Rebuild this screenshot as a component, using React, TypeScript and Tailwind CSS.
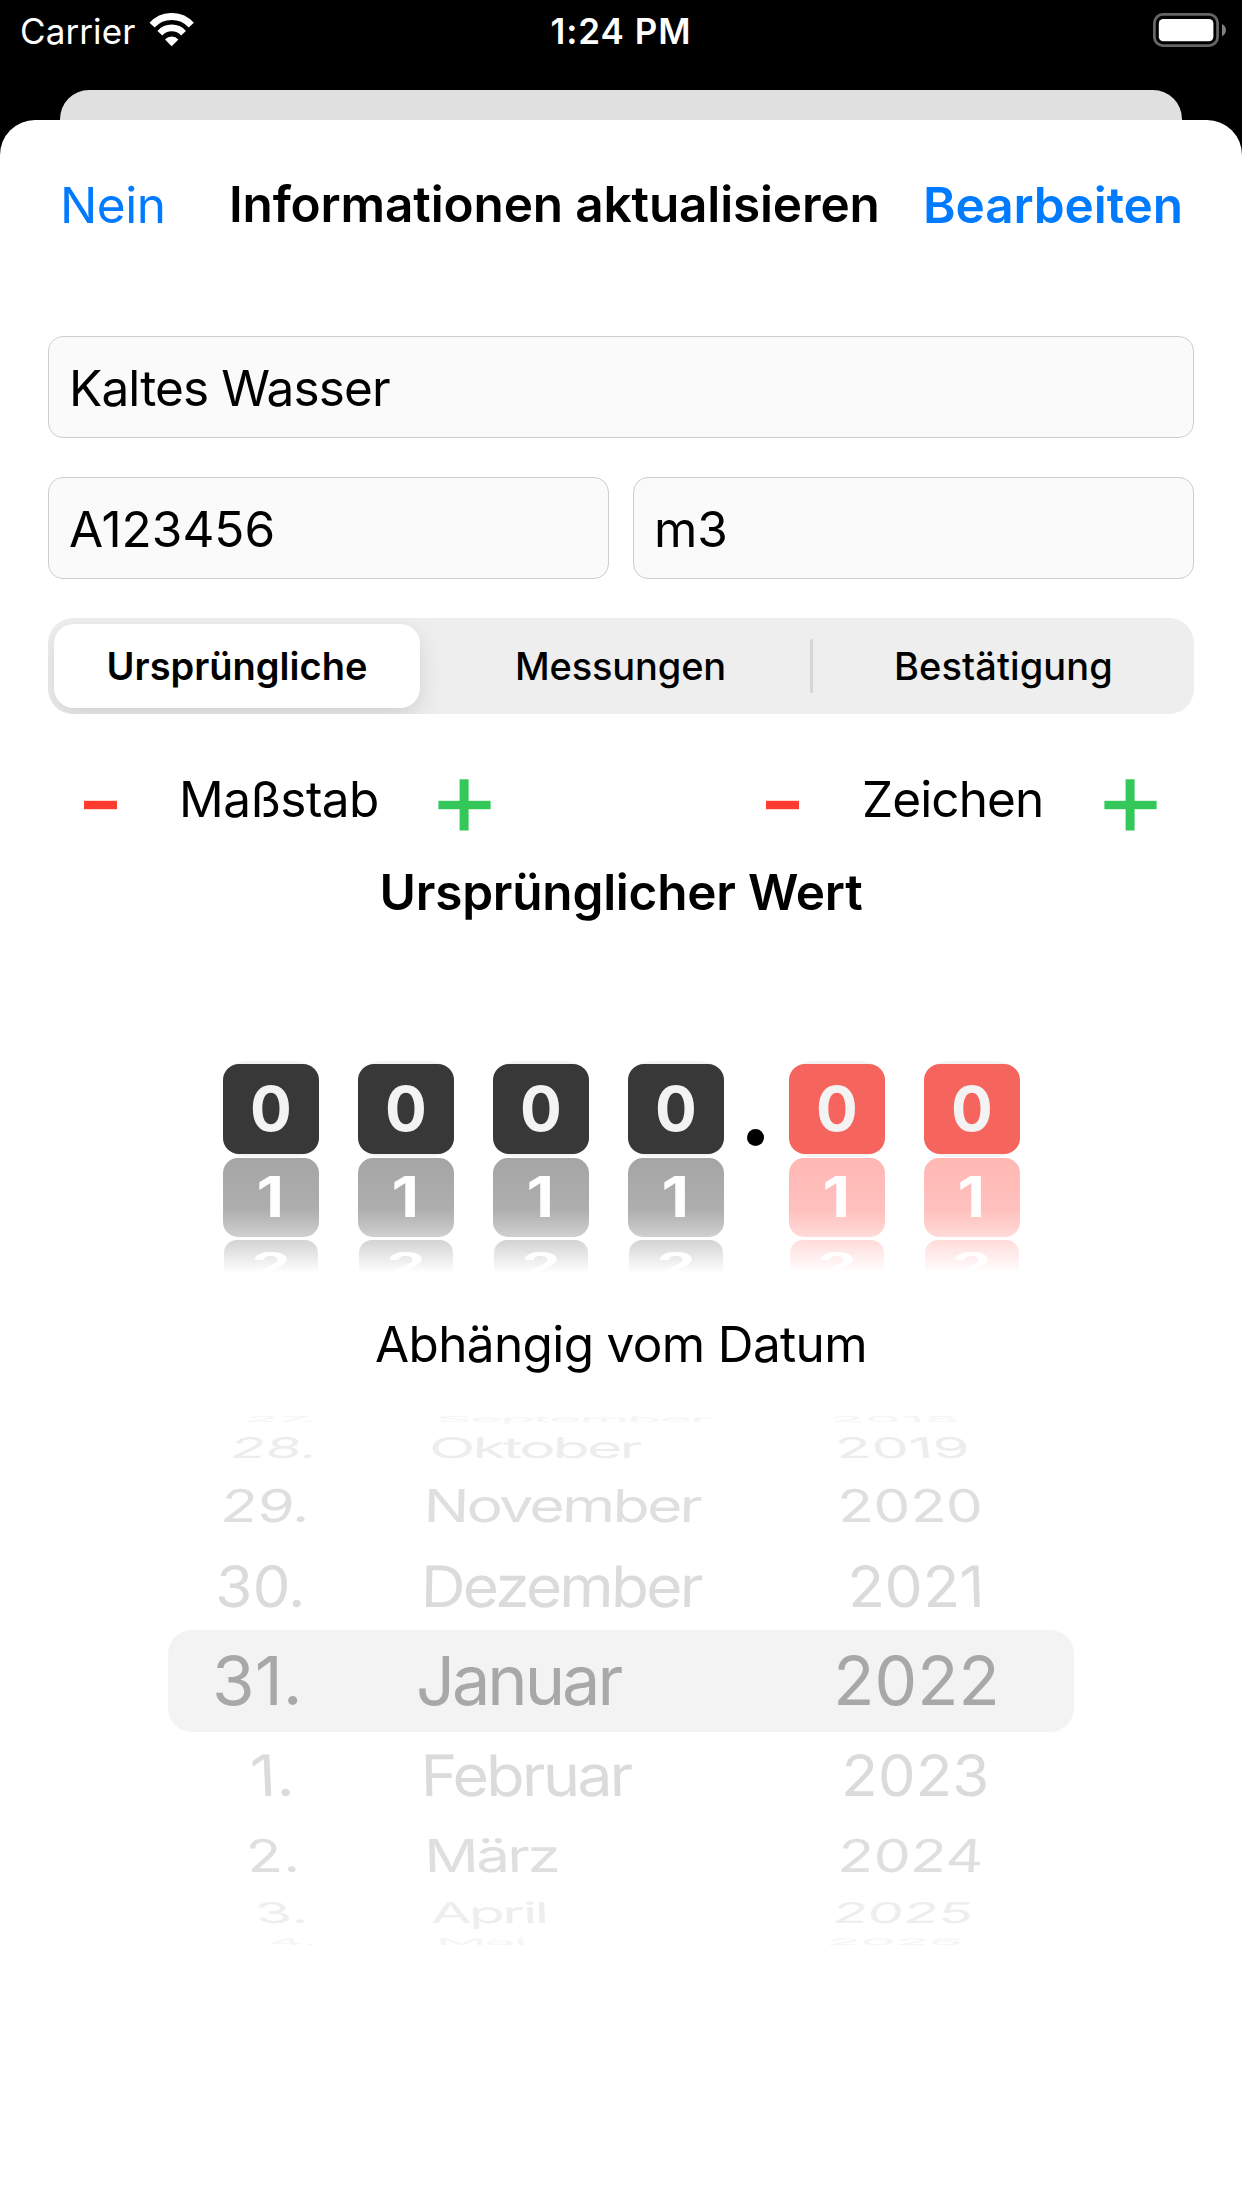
import { useState } from "react";
import { clsx } from "clsx";

const TABS = ["Ursprüngliche", "Messungen", "Bestätigung"];

const WHEELS = [
  { digit: "0", fraction: false },
  { digit: "0", fraction: false },
  { digit: "0", fraction: false },
  { digit: "0", fraction: false },
  { digit: "0", fraction: true },
  { digit: "0", fraction: true },
];

// x: offset inside the column, sx: horizontal squeeze, skew: lean in degrees
type Cell = { text: string; x: number; sx: number; skew: number };
type Row = { height: string; color: string; sy: number; cells: Cell[] };

const DATE_ROWS: Row[] = [
  {
    height: "h-[6px]",
    color: "text-[#f5f5f5]",
    sy: 0.12,
    cells: [
      { text: "27.", x: 26, sx: 0.81, skew: -35 },
      { text: "September", x: 17, sx: 0.84, skew: -12 },
      { text: "2018", x: -3.6, sx: 0.85, skew: 22 },
    ],
  },
  {
    height: "h-[36px]",
    color: "text-[#ededed]",
    sy: 0.42,
    cells: [
      { text: "28.", x: 13, sx: 0.85, skew: -11 },
      { text: "Oktober", x: 10.8, sx: 0.886, skew: -2 },
      { text: "2019", x: 2.6, sx: 0.87, skew: 7 },
    ],
  },
  {
    height: "h-[64px]",
    color: "text-[#dfdfdf]",
    sy: 0.665,
    cells: [
      { text: "29.", x: 3.8, sx: 0.878, skew: -5 },
      { text: "November", x: 5.3, sx: 0.892, skew: -1.5 },
      { text: "2020", x: 4.6, sx: 0.86, skew: 3 },
    ],
  },
  {
    height: "h-[85px]",
    color: "text-[#dbdbdb]",
    sy: 0.84,
    cells: [
      { text: "30.", x: -1.2, sx: 0.881, skew: -2.5 },
      { text: "Dezember", x: 2.4, sx: 0.913, skew: -1 },
      { text: "2021", x: 14.2, sx: 0.892, skew: 2 },
    ],
  },
  {
    height: "h-[102px] mt-[23px] pb-[27px] rounded-[24px] bg-[#f3f3f3]",
    color: "text-[#a8a8a8]",
    sy: 1,
    cells: [
      { text: "31.", x: -4, sx: 1.016, skew: 0 },
      { text: "Januar", x: -2, sx: 1.005, skew: 0 },
      { text: "2022", x: -0.8, sx: 0.995, skew: 0 },
    ],
  },
  {
    height: "h-[64px]",
    color: "text-[#dbdbdb]",
    sy: 0.84,
    cells: [
      { text: "1.", x: 35.2, sx: 0.922, skew: 2.7 },
      { text: "Februar", x: 3, sx: 0.923, skew: 1 },
      { text: "2023", x: 7, sx: 0.882, skew: -1 },
    ],
  },
  {
    height: "h-[76px]",
    color: "text-[#dfdfdf]",
    sy: 0.665,
    cells: [
      { text: "2.", x: 31.8, sx: 0.86, skew: 5 },
      { text: "März", x: 6.8, sx: 0.885, skew: 1.5 },
      { text: "2024", x: 3, sx: 0.863, skew: -3.5 },
    ],
  },
  {
    height: "h-[51px]",
    color: "text-[#eeeeee]",
    sy: 0.42,
    cells: [
      { text: "3.", x: 41, sx: 0.86, skew: 10 },
      { text: "April", x: 12.8, sx: 0.87, skew: 2 },
      { text: "2025", x: -2.6, sx: 0.84, skew: -9 },
    ],
  },
  {
    height: "h-[22px]",
    color: "text-[#f5f5f5]",
    sy: 0.13,
    cells: [
      { text: "4.", x: 53.5, sx: 0.8, skew: 28 },
      { text: "Mai", x: 18.5, sx: 0.83, skew: 12 },
      { text: "2026", x: -8.4, sx: 0.81, skew: -24 },
    ],
  },
];

function WifiIcon() {
  return (
    <svg width="46" height="34" viewBox="0 0 46 34" fill="none">
      <path d="M3.1 12.1A26.6 26.6 0 0 1 42.3 12.1" stroke="#fff" strokeWidth="7" />
      <path d="M10.9 20.2A15.8 15.8 0 0 1 34.5 20.2" stroke="#fff" strokeWidth="6.6" />
      <path d="M22.7 33.2L16 26.4A9.3 9.3 0 0 1 29.4 26.4Z" fill="#fff" />
    </svg>
  );
}

function BatteryIcon() {
  return (
    <svg width="74" height="34" viewBox="0 0 74 34" fill="none">
      <rect x="1.4" y="1.4" width="63.2" height="31.2" rx="8.5" stroke="#666" strokeWidth="2.8" />
      <rect x="5.8" y="6" width="54.6" height="22.3" rx="4.5" fill="#fff" />
      <path d="M69 11C71 12 73 14 73 17C73 20 71 22.3 69 23.3Z" fill="#808080" />
    </svg>
  );
}

function StatusBar() {
  return (
    <div className="grid h-[90px] grid-cols-3 items-start text-[35px] leading-[26px] text-white">
      <div className="flex items-start pt-[13px] pl-[20px]">
        <span className="mt-[5px] tracking-[0.1px]">Carrier</span>
        <span className="ml-[14px]">
          <WifiIcon />
        </span>
      </div>
      <div className="pt-[18px] text-center font-semibold tracking-[1px]">1:24 PM</div>
      <div className="flex justify-end pt-[13px] pr-[15px]">
        <BatteryIcon />
      </div>
    </div>
  );
}

function Field({ value }: { value: string }) {
  return (
    <input
      defaultValue={value}
      className={clsx(
        "h-[102px] w-full min-w-0 rounded-[15px] border border-[#cdcdcd] bg-[#fafafa] pt-[2px] pr-5 pl-5 text-[49.5px] text-black outline-none",
        value.includes(" ") && "tracking-[-0.88px]",
      )}
    />
  );
}

function MinusIcon() {
  return (
    <svg width="33" height="52" viewBox="0 0 33 52">
      <rect y="21.8" width="33" height="8.4" fill="#ff3b30" />
    </svg>
  );
}

function PlusIcon() {
  return (
    <svg width="53" height="52" viewBox="0 0 53 52">
      <rect x="0.4" y="21.8" width="52.2" height="8.4" fill="#34c759" />
      <rect x="21.6" y="0.3" width="9" height="51.2" fill="#34c759" />
    </svg>
  );
}

function Wheel({ digit, fraction }: { digit: string; fraction: boolean }) {
  return (
    <div className="flex w-[96px] flex-col items-center text-[62px] leading-[45px] font-[650]">
      <div className="h-[96px] w-full rounded-[24px] bg-[#f3f3f3] pt-[3px]">
        <div
          className={clsx(
            "flex h-[90px] justify-center rounded-[16px] pt-[22px] text-[#f3f3f3]",
            fraction ? "bg-[#f5645d]" : "bg-[#383838]",
          )}
        >
          {digit}
        </div>
      </div>
      <div
        className={clsx(
          "mt-px flex h-[79px] w-full justify-center rounded-[15px] bg-linear-to-b pt-[15px] font-bold text-white",
          fraction
            ? "from-[#ffb8b4] via-[#ffc0bd] via-65% to-[#ffdbd9]"
            : "from-[#a5a5a5] via-[#aeaeae] via-65% to-[#d0d0d0]",
        )}
      >
        <span className="-translate-x-px scale-x-[1.03] scale-y-[0.9]">1</span>
      </div>
      <div
        className={clsx(
          "mt-[3px] flex h-[33px] w-[94px] justify-center overflow-hidden rounded-t-[13px] bg-linear-to-b pt-[12px] text-white",
          fraction ? "from-[#ffdcda] to-white" : "from-[#d3d3d3] to-white",
        )}
      >
        <span className="origin-top scale-y-[0.55]">2</span>
      </div>
    </div>
  );
}

function DateRow({ row }: { row: Row }) {
  return (
    <div
      className={clsx(
        "grid shrink-0 grid-cols-[202px_416px_1fr] items-end pl-[48px] text-[68px] leading-[50px] whitespace-nowrap",
        row.height,
        row.color,
      )}
    >
      {row.cells.map((c, i) => (
        <div key={c.text} className="flex h-0 items-end">
          <span
            className={clsx("origin-bottom-left", i === 1 && "tracking-[-3px]")}
            style={{ transform: `translateX(${c.x}px) skewX(${c.skew}deg) scale(${c.sx}, ${row.sy})` }}
          >
            {c.text}
          </span>
        </div>
      ))}
    </div>
  );
}

export default function App() {
  const [tab, setTab] = useState(0);

  return (
    <div className="h-[2208px] w-[1242px] overflow-hidden bg-black font-['Inter',sans-serif] text-black">
      <StatusBar />
      <div className="mx-[60px] h-[30px] rounded-t-[29px] bg-[#e0e0e0]" />

      <div className="flex h-[2088px] flex-col rounded-t-[35px] bg-white">
        <header className="flex items-start pt-[66px] pl-[60px] text-[49.5px] leading-[36px] whitespace-nowrap">
          <button className="mt-px w-[106px] text-left tracking-[-0.5px] text-[#007aff]">Nein</button>
          <h1 className="ml-[63px] w-[652px] font-semibold tracking-[-0.14px]">
            Informationen aktualisieren
          </h1>
          <button className="mt-px ml-[42px] font-semibold tracking-[-0.1px] text-[#007aff]">
            Bearbeiten
          </button>
        </header>

        <div className="mt-[113px] flex flex-col gap-[39px] px-[48px]">
          <Field value="Kaltes Wasser" />
          <div className="flex gap-6">
            <Field value="A123456" />
            <Field value="m3" />
          </div>

          <div className="flex h-[96px] items-center overflow-hidden rounded-[25px] bg-[#eeeeee] px-[6px] text-[38px] leading-[28px]">
            {TABS.map((t, i) => (
              <div key={t} className="flex items-center">
                <button
                  onClick={() => setTab(i)}
                  className={clsx(
                    "h-[84px] rounded-[20px]",
                    i === 0 && "w-[366px]",
                    i === 1 && "w-[390px] pl-[11px] tracking-[-0.15px]",
                    i === 2 && "w-[381px] tracking-[0.1px]",
                    tab === i
                      ? "bg-white font-semibold shadow-[0_9px_24px_rgba(0,0,0,0.11),0_6px_3px_rgba(0,0,0,0.01)]"
                      : "font-medium",
                  )}
                >
                  {t}
                </button>
                {i === 1 && <div className="h-[54px] w-[3px] rounded-full bg-[#d5d5d5]" />}
              </div>
            ))}
          </div>
        </div>

        <div className="mt-[65px] flex h-[52px] items-start pl-[84px] text-[49.5px] leading-[36px]">
          <MinusIcon />
          <span className="mt-[2px] ml-[62px] w-[201px] tracking-[-0.55px]">Maßstab</span>
          <span className="ml-[58px]">
            <PlusIcon />
          </span>
          <span className="ml-[275px]">
            <MinusIcon />
          </span>
          <span className="mt-[2px] ml-[63px] w-[181px] tracking-[-0.9px]">Zeichen</span>
          <span className="ml-[61px]">
            <PlusIcon />
          </span>
        </div>

        <h2 className="mt-[43px] text-center text-[49.5px] leading-[36px] font-semibold tracking-[-0.22px]">
          Ursprünglicher Wert
        </h2>

        <div className="mt-[151px] flex h-[212px] pl-[223px]">
          <div className="flex gap-[39px]">
            {WHEELS.slice(0, 4).map((w, i) => (
              <Wheel key={i} {...w} />
            ))}
          </div>
          <div className="mt-[68px] mr-[25px] ml-[23px] size-[17px] rounded-full bg-black" />
          <div className="flex gap-[39px]">
            {WHEELS.slice(4).map((w, i) => (
              <Wheel key={i} {...w} />
            ))}
          </div>
        </div>

        <p className="mt-[53px] text-center text-[49.5px] leading-[36px] tracking-[-0.65px]">
          Abhängig vom Datum
        </p>

        <div className="mx-[168px] mt-[54px] flex flex-col">
          {DATE_ROWS.map((row) => (
            <DateRow key={row.cells[1].text} row={row} />
          ))}
        </div>
      </div>
    </div>
  );
}
